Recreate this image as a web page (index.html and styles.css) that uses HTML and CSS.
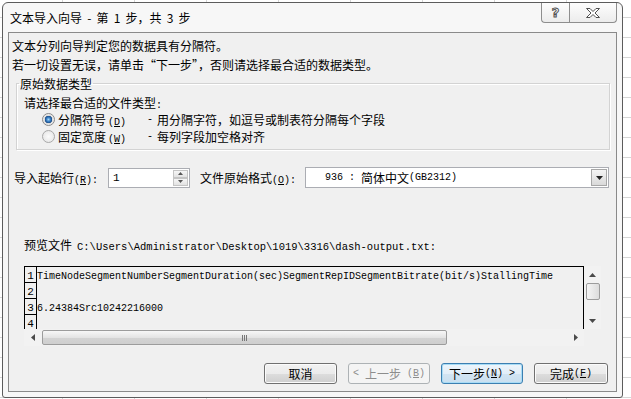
FILE: index.html
```html
<!DOCTYPE html>
<html lang="zh-CN">
<head>
  <meta charset="UTF-8">
  <meta name="viewport" content="width=device-width, initial-scale=1.0">
  <title>文本导入向导</title>
  <link rel="stylesheet" href="styles.css">
</head>
<body>
  <div class="window">
    <div class="titlebar">
      <span class="title">文本导入向导 - 第 1 步，共 3 步</span>
      <div class="caption-btns">
        <span class="cap-btn help">?</span>
        <span class="cap-btn close">
          <svg width="16" height="12" viewBox="0 0 16 12"><path d="M1.5 1.5h3.5l3 3 3-3h3.5l-4.5 4.5 4.5 4.5h-3.5l-3-3-3 3h-3.5l4.5-4.5z" fill="#fff" stroke="#505050" stroke-width="1"/></svg>
        </span>
      </div>
    </div>

    <div class="panel">
      <p class="intro">文本分列向导判定您的数据具有分隔符。</p>
      <p class="intro">若一切设置无误，请单击“下一步”，否则请选择最合适的数据类型。</p>

      <fieldset class="group">
        <legend>原始数据类型</legend>
        <div class="hint">请选择最合适的文件类型<span class="en">:</span></div>
        <div class="option">
          <span class="radio on"></span>
          <span class="opt-key">分隔符号<span class="en key">(<u>D</u>)</span></span>
          <span class="en dash">-</span>用分隔字符，如逗号或制表符分隔每个字段
        </div>
        <div class="option">
          <span class="radio"></span>
          <span class="opt-key">固定宽度<span class="en key">(<u>W</u>)</span></span>
          <span class="en dash">-</span>每列字段加空格对齐
        </div>
      </fieldset>

      <div class="settings">
        <span class="lbl-start">导入起始行<span class="en">(<u>R</u>):</span></span>
        <div class="spin-input">
          <span class="input-val">1</span>
          <div class="spinner">
            <span class="spin-btn"><svg width="5" height="3"><path d="M0 3L2.5 0 5 3z" fill="#555"/></svg></span>
            <span class="spin-btn"><svg width="5" height="3"><path d="M0 0L2.5 3 5 0z" fill="#555"/></svg></span>
          </div>
        </div>
        <span class="lbl-format">文件原始格式<span class="en">(<u>O</u>):</span></span>
        <div class="combo">
          <span class="en">936 : </span>简体中文<span class="en">(GB2312)</span>
          <span class="combo-btn"><svg width="7" height="4"><path d="M0 0h7L3.5 4z" fill="#222"/></svg></span>
        </div>
      </div>

      <div class="preview-label">预览文件<span class="en path">C:\Users\Administrator\Desktop\1019\3316\dash-output.txt:</span></div>

      <div class="preview">
        <div class="preview-main">
          <div class="grid">
            <div class="row"><span class="num">1</span><span class="line">TimeNodeSegmentNumberSegmentDuration(sec)SegmentRepIDSegmentBitrate(bit/s)StallingTime</span></div>
            <div class="row"><span class="num">2</span><span class="line"></span></div>
            <div class="row"><span class="num">3</span><span class="line">6.24384Src10242216000</span></div>
            <div class="row"><span class="num">4</span><span class="line"></span></div>
          </div>
          <div class="vscroll">
            <span class="arrow"><svg width="7" height="4"><path d="M0 4L3.5 0 7 4z" fill="#4a4a4a"/></svg></span>
            <span class="v-thumb"></span>
            <span class="track"></span>
            <span class="arrow"><svg width="7" height="4"><path d="M0 0h7L3.5 4z" fill="#4a4a4a"/></svg></span>
          </div>
        </div>
        <div class="hscroll">
          <span class="arrow"><svg width="4" height="7"><path d="M4 0v7L0 3.5z" fill="#4a4a4a"/></svg></span>
          <span class="h-thumb"><span class="grip"></span></span>
          <span class="track"></span>
          <span class="arrow"><svg width="4" height="7"><path d="M0 0v7L4 3.5z" fill="#4a4a4a"/></svg></span>
        </div>
      </div>

      <div class="actions">
        <span class="btn w-cancel">取消</span>
        <span class="btn btn-disabled w-step"><span class="en">&lt; </span>上一步<span class="en"> (<u>B</u>)</span></span>
        <span class="btn btn-default w-step">下一步<span class="en">(<u>N</u>) &gt;</span></span>
        <span class="btn w-finish">完成<span class="en">(<u>F</u>)</span></span>
      </div>
    </div>
  </div>
</body>
</html>
```

FILE: styles.css
```css
body {
  margin: 0;
  padding: 2px 0 0 2px;
  width: 631px;
  height: 399px;
  box-sizing: border-box;
  overflow: hidden;
  font-family: "Noto Sans CJK SC", sans-serif;
  font-size: 12px;
  color: #000;
  background-color: #fff;
  background-image:
    linear-gradient(to right, #d6d6d6 1px, transparent 1px),
    linear-gradient(to bottom, #d6d6d6 1px, transparent 1px);
  background-size: 72px 20px, 72px 20px;
  background-position: 62px 0, 0 17px;
}
.en {
  font-family: "Liberation Mono", monospace;
  font-size: 10px;
  line-height: 1;
}
.window {
  width: 621px;
  height: 396px;
  box-sizing: border-box;
  border: 1px solid #5c5c5c;
  border-radius: 6px 6px 3px 3px;
  background-color: #f7f7f7;
}
.titlebar {
  display: flex;
  justify-content: space-between;
  align-items: flex-start;
  height: 29px;
}
.title {
  padding-left: 7px;
  line-height: 29px;
  word-spacing: 2.5px;
}
.caption-btns {
  display: flex;
  margin-right: 5px;
}
.cap-btn {
  display: flex;
  align-items: center;
  justify-content: center;
  height: 20px;
  box-sizing: border-box;
  border: 1px solid #8e8e8e;
  border-top: none;
  background: linear-gradient(#fdfdfd, #ececec);
}
.help {
  width: 28px;
  border-right: none;
  border-bottom-left-radius: 4px;
  font-family: "DejaVu Sans", sans-serif;
  font-weight: bold;
  font-size: 13px;
  color: #fff;
  -webkit-text-stroke: 1px #505050;
}
.close {
  width: 48px;
  border-bottom-right-radius: 4px;
}
.panel {
  margin: 0 5px;
  height: 360px;
  box-sizing: border-box;
  border: 1px solid #8a8a8a;
  background-color: #f0f0f0;
  padding: 3px 0 0 3px;
}
.intro {
  margin: 0;
  line-height: 19px;
}
.group {
  margin: 0 6px 0 4px;
  padding: 0 0 4px 7px;
  min-width: 0;
  border: 1px solid #d3d3d3;
  box-shadow: inset 1px 1px 0 #fff, 1px 1px 0 #fff;
}
.group legend {
  margin-left: -5px;
  padding: 0 1px;
  line-height: 19px;
}
.hint {
  margin-top: 1px;
  height: 17px;
  line-height: 17px;
}
.option {
  display: flex;
  align-items: center;
  height: 17px;
  padding-left: 18px;
}
.radio {
  width: 13px;
  height: 13px;
  box-sizing: border-box;
  margin-right: 3px;
  border: 1px solid #a9a9a9;
  border-radius: 50%;
  background: radial-gradient(circle, #fbfbfb 0, #e8e8e8 6px);
}
.radio.on {
  border-color: #8a8a8a;
  background: radial-gradient(circle, #9fd6f7 0, #3a7fc4 2px, #1c4f8a 3.5px, #dcdcdc 4px, #f4f4f4 6px);
}
.opt-key {
  width: 89px;
}
.key {
  margin-left: 2px;
}
.dash {
  margin-right: 4px;
}
.settings {
  display: flex;
  align-items: center;
  height: 21px;
  margin-top: 17px;
  padding-left: 2px;
}
.lbl-start {
  width: 94px;
}
.spin-input {
  display: flex;
  align-items: center;
  width: 82px;
  height: 20px;
  box-sizing: border-box;
  border: 1px solid #abadb3;
  background-color: #fff;
}
.input-val {
  padding-left: 4px;
  font-family: "Liberation Mono", monospace;
  font-size: 11px;
}
.spinner {
  display: flex;
  flex-direction: column;
  margin-left: auto;
  margin-right: 1px;
  width: 15px;
  height: 16px;
}
.spin-btn {
  display: flex;
  align-items: center;
  justify-content: center;
  height: 8px;
  box-sizing: border-box;
  border: 1px solid #c4c4c4;
  background: linear-gradient(#f6f6f6, #e2e2e2);
}
.lbl-format {
  width: 105px;
  margin-left: 10px;
}
.combo {
  display: flex;
  align-items: center;
  width: 304px;
  height: 21px;
  box-sizing: border-box;
  border: 1px solid #abadb3;
  background-color: #fff;
  padding-left: 19px;
  white-space: pre;
}
.combo-btn {
  display: flex;
  align-items: center;
  justify-content: center;
  margin-left: auto;
  margin-right: 1px;
  width: 16px;
  height: 17px;
  box-sizing: border-box;
  border: 1px solid #a7a7a7;
  background: linear-gradient(#f4f4f4, #d9d9d9);
}
.preview-label {
  margin: 48px 0 0 12px;
  height: 18px;
  line-height: 18px;
}
.path {
  margin-left: 5px;
  font-size: 10.5px;
}
.preview {
  margin: 12px 0 0 12px;
  width: 577px;
}
.preview-main {
  display: flex;
  height: 63px;
}
.grid {
  width: 560px;
  box-sizing: border-box;
  border: 1px solid #000;
  border-bottom: none;
  overflow: hidden;
}
.row {
  display: flex;
  height: 16px;
}
.num {
  display: flex;
  align-items: flex-end;
  justify-content: center;
  width: 11px;
  height: 15px;
  border-right: 1px solid #000;
  border-bottom: 1px solid #000;
  font-family: "Liberation Mono", monospace;
  font-size: 11px;
  line-height: 11px;
}
.line {
  font-family: "Liberation Mono", monospace;
  font-size: 10px;
  line-height: 19px;
  height: 16px;
  white-space: pre;
}
.vscroll {
  display: flex;
  flex-direction: column;
  width: 17px;
  background-color: #f2f2f2;
}
.arrow {
  display: flex;
  align-items: center;
  justify-content: center;
  width: 17px;
  height: 17px;
  flex: none;
}
.v-thumb {
  height: 15px;
  margin: 0 1px 0 2px;
  border: 1px solid #9c9c9c;
  border-radius: 2px;
  background: linear-gradient(to right, #f5f5f5, #dcdcdc);
}
.track {
  flex: 1;
}
.hscroll {
  display: flex;
  align-items: center;
  width: 560px;
  height: 17px;
  background-color: #f2f2f2;
}
.h-thumb {
  display: flex;
  align-items: center;
  justify-content: center;
  width: 403px;
  height: 13px;
  margin-left: 1px;
  border: 1px solid #9c9c9c;
  border-radius: 2px;
  background: linear-gradient(#f7f7f7, #e4e4e4 50%, #d3d3d3 51%, #cfcfcf);
}
.grip {
  width: 5px;
  height: 6px;
  background: repeating-linear-gradient(to right, #777 0, #777 1px, transparent 1px, transparent 2px);
}
.actions {
  display: flex;
  justify-content: flex-end;
  gap: 11px;
  margin: 17px 8px 0 0;
}
.btn {
  display: flex;
  align-items: center;
  justify-content: center;
  height: 21px;
  box-sizing: border-box;
  border: 1px solid #707070;
  border-radius: 3px;
  background: linear-gradient(#f2f2f2, #ebebeb 50%, #dddddd 51%, #cfcfcf);
  box-shadow: inset 0 0 0 1px #fbfbfb;
  white-space: pre;
}
.w-cancel {
  width: 73px;
}
.w-step {
  width: 82px;
}
.w-finish {
  width: 74px;
}
.btn-disabled {
  border-color: #adb2b5;
  background: #f4f4f4;
  color: #8d8d8d;
  box-shadow: none;
}
.btn-default {
  border-color: #3c7fb1;
  background: linear-gradient(#edf5fb, #e2eef8 50%, #d2e4f2 51%, #c9dff0);
  box-shadow: inset 0 0 0 1px #a8dcf6;
}
```
